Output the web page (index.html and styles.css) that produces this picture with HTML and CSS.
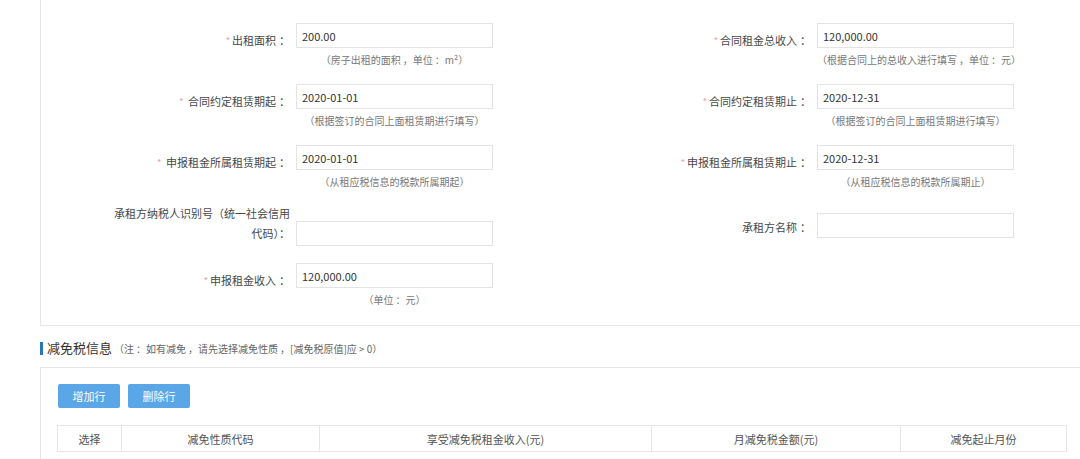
FILE: index.html
```html
<!DOCTYPE html>
<html lang="zh-CN">
<head>
<meta charset="utf-8">
<title>出租信息</title>
<link rel="stylesheet" href="styles.css">
</head>
<body>
<div class="panel form-panel">
  <div class="form-cols">
    <div class="col">
      <div class="field">
        <label class="lbl"><span class="req">*</span>出租面积<span class="co">：</span></label>
        <div class="ctl"><input class="inp" type="text" value="200.00" readonly><div class="hint">（房子出租的面积<span class="co">，</span>单位<span class="co">：</span>m²）</div></div>
      </div>
      <div class="field">
        <label class="lbl"><span class="req">*</span> 合同约定租赁期起<span class="co">：</span></label>
        <div class="ctl"><input class="inp" type="text" value="2020-01-01" readonly><div class="hint">（根据签订的合同上面租赁期进行填写）</div></div>
      </div>
      <div class="field">
        <label class="lbl"><span class="req">*</span> 申报租金所属租赁期起<span class="co">：</span></label>
        <div class="ctl"><input class="inp" type="text" value="2020-01-01" readonly><div class="hint">（从租应税信息的税款所属期起）</div></div>
      </div>
      <div class="field field-tall">
        <label class="lbl">承租方纳税人识别号（统一社会信用代码）：</label>
        <div class="ctl"><input class="inp" type="text" value="" readonly></div>
      </div>
      <div class="field">
        <label class="lbl"><span class="req">*</span>申报租金收入<span class="co">：</span></label>
        <div class="ctl"><input class="inp" type="text" value="120,000.00" readonly><div class="hint">（单位<span class="co">：</span>元）</div></div>
      </div>
    </div>
    <div class="col col-right">
      <div class="field">
        <label class="lbl"><span class="req">*</span>合同租金总收入<span class="co">：</span></label>
        <div class="ctl"><input class="inp" type="text" value="120,000.00" readonly><div class="hint">（根据合同上的总收入进行填写<span class="co">，</span>单位<span class="co">：</span>元）</div></div>
      </div>
      <div class="field">
        <label class="lbl"><span class="req">*</span>合同约定租赁期止<span class="co">：</span></label>
        <div class="ctl"><input class="inp" type="text" value="2020-12-31" readonly><div class="hint">（根据签订的合同上面租赁期进行填写）</div></div>
      </div>
      <div class="field">
        <label class="lbl"><span class="req">*</span>申报租金所属租赁期止<span class="co">：</span></label>
        <div class="ctl"><input class="inp" type="text" value="2020-12-31" readonly><div class="hint">（从租应税信息的税款所属期止）</div></div>
      </div>
      <div class="field field-plain">
        <label class="lbl">承租方名称<span class="co">：</span></label>
        <div class="ctl"><input class="inp" type="text" value="" readonly></div>
      </div>
    </div>
  </div>
</div>

<div class="sec-head">
  <span class="bar"></span><span class="sec-title">减免税信息</span><span class="sec-note">（注<span class="co">：</span>如有减免<span class="co">，</span>请先选择减免性质<span class="co">，</span>[减免税原值]应 &gt; 0）</span>
</div>

<div class="panel grid-panel">
  <div class="btns">
    <button class="btn" type="button">增加行</button>
    <button class="btn" type="button">删除行</button>
  </div>
  <table class="grid">
    <colgroup>
      <col class="c1"><col class="c2"><col class="c3"><col class="c4"><col class="c5">
    </colgroup>
    <thead>
      <tr><th>选择</th><th>减免性质代码</th><th>享受减免税租金收入(元)</th><th>月减免税金额(元)</th><th>减免起止月份</th></tr>
    </thead>
  </table>
</div>
</body>
</html>
```

FILE: styles.css
```css
* { box-sizing: border-box; }

html, body {
  margin: 0;
  padding: 0;
  background: #ffffff;
}

body {
  font-family: "Noto Sans CJK SC", "Noto Sans", "Liberation Sans", sans-serif;
  font-size: 11px;
  color: #444;
  overflow: hidden;
}

/* full-width punctuation with a little space before it, as in the original font */
.co {
  padding-left: 3px;
}

.hint .co,
.sec-note .co {
  padding-left: 2px;
}

.panel {
  margin-left: 40px;
  border-left: 1px solid #e6e6e6;
}

.form-panel {
  padding: 23px 0 13px 69px;
  border-bottom: 1px solid #e8e8e8;
}

.form-cols {
  display: flex;
}

.col {
  width: 521px;
  flex: none;
  display: flex;
  flex-direction: column;
}

.col-right {
  width: auto;
  flex: 1 1 auto;
  min-width: 0;
}

.field {
  display: flex;
  align-items: flex-start;
  margin-bottom: 12px;
}

.field:last-child {
  margin-bottom: 0;
}

.lbl {
  width: 180px;
  flex: none;
  text-align: right;
  line-height: 20px;
  padding-top: 7px;
  margin-right: 4px;
  color: #484848;
  font-size: 11px;
}

.req {
  color: #f19a9a;
  font-size: 9px;
  margin-right: 2px;
  vertical-align: 1px;
}

.ctl {
  width: 197px;
  flex: none;
  margin-left: 2px;
}

.inp {
  display: block;
  width: 197px;
  height: 25px;
  margin: 0;
  padding: 0 0 0 5px;
  border: 1px solid #e3e3e3;
  border-radius: 0;
  background: #fff;
  font-family: "Noto Sans CJK SC", "Noto Sans", "Liberation Sans", sans-serif;
  font-size: 11px;
  color: #333;
  outline: none;
}

.hint {
  line-height: 24px;
  font-size: 10px;
  color: #777;
  text-align: center;
  white-space: nowrap;
}

.field-tall .lbl {
  padding-top: 0;
  margin-top: -3px;
}

.field-tall .ctl {
  margin-top: 15px;
}

.field-tall {
  margin-bottom: 17px;
}

.field-plain .lbl {
  padding-top: 11px;
}

.field-plain .ctl {
  margin-top: 7px;
}

.sec-head {
  margin-left: 40px;
  padding: 11px 0 8px 0;
  display: flex;
  align-items: center;
  line-height: 20px;
}

.bar {
  display: inline-block;
  width: 3px;
  height: 13px;
  background: #2a78b3;
  margin-right: 4px;
}

.sec-title {
  font-size: 13px;
  color: #333;
}

.sec-note {
  font-size: 10px;
  color: #666;
  margin-left: 2px;
  padding-top: 2px;
}

.grid-panel {
  border-top: 1px solid #e6e6e6;
  padding: 16px 0 20px 16px;
}

.btns {
  display: flex;
  gap: 8px;
  padding-left: 1px;
}

.btn {
  width: 62px;
  height: 24px;
  margin: 0;
  padding: 0;
  border: none;
  border-radius: 2px;
  background: #5ba6e6;
  color: #fff;
  font-family: "Noto Sans CJK SC", "Noto Sans", "Liberation Sans", sans-serif;
  font-size: 11px;
  line-height: 24px;
}

.grid {
  margin-top: 17px;
  width: 1009px;
  border-collapse: collapse;
  table-layout: fixed;
}

.grid th {
  height: 26px;
  padding: 0;
  border: 1px solid #e6e6e6;
  font-weight: normal;
  font-size: 11px;
  color: #555;
  text-align: center;
  background: #fff;
}

.c1 { width: 64px; }
.c2 { width: 198px; }
.c3 { width: 332px; }
.c4 { width: 249px; }
.c5 { width: 166px; }
```
